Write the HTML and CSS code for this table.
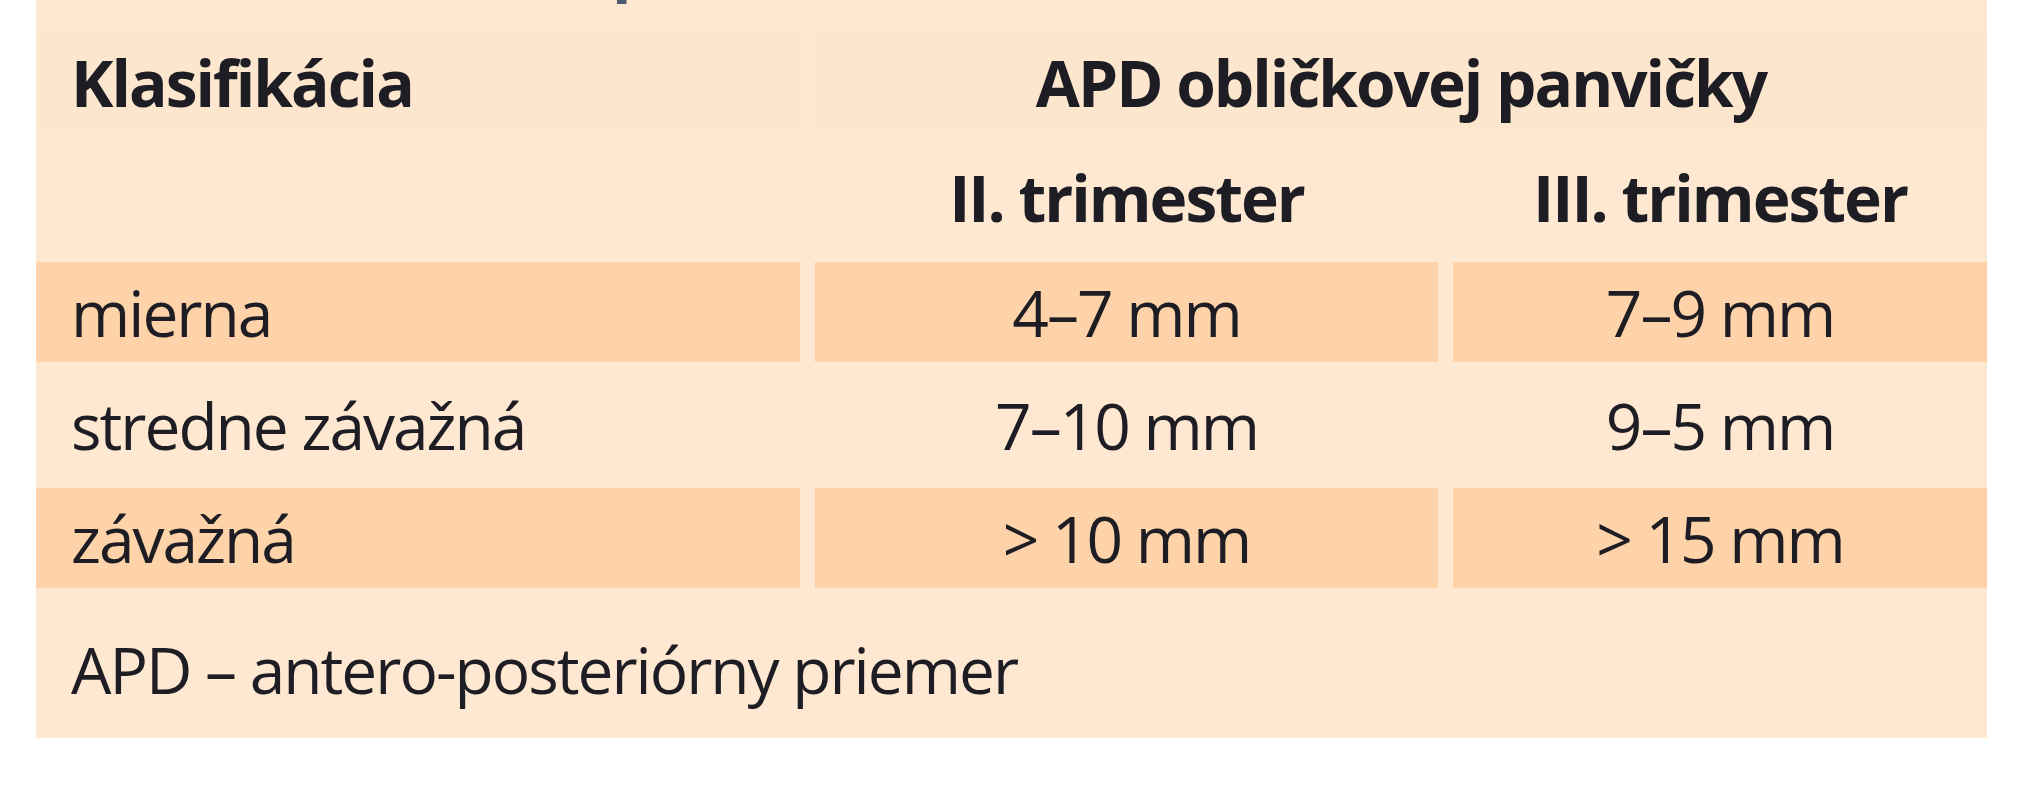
FILE: index.html
```html
<!DOCTYPE html>
<html lang="sk">
<head>
<meta charset="utf-8">
<title>Klasifikácia APD obličkovej panvičky</title>
<link rel="stylesheet" href="styles.css">
</head>
<body>
<div class="panel">
  <div class="caption"><span class="caption-text">p</span></div>
  <div class="grid">
    <div class="cell hd shade left">Klasifikácia</div>
    <div class="cell hd shade span2">APD obličkovej panvičky</div>
    <div class="cell hd left"></div>
    <div class="cell hd">II. trimester</div>
    <div class="cell hd">III. trimester</div>

    <div class="cell hl left">mierna</div>
    <div class="cell hl">4–7 mm</div>
    <div class="cell hl">7–9 mm</div>

    <div class="cell left">stredne závažná</div>
    <div class="cell">7–10 mm</div>
    <div class="cell">9–5 mm</div>

    <div class="cell hl left">závažná</div>
    <div class="cell hl">&gt; 10 mm</div>
    <div class="cell hl">&gt; 15 mm</div>
  </div>
  <div class="note">APD – antero-posteriórny priemer</div>
</div>
</body>
</html>
```

FILE: styles.css
```css
html, body {
  margin: 0;
  padding: 0;
  background: #ffffff;
}

body {
  font-family: "Open Sans", "Noto Sans", sans-serif;
  color: #1e1d24;
}

.panel {
  margin-left: 36px;
  width: 1951px;
  background: #fee8d1;
}

.caption {
  height: 7px;
  overflow: hidden;
  padding-left: 576px;
}

.caption-text {
  display: block;
  margin-top: -68px;
  font-size: 64px;
  line-height: 64px;
  font-weight: 700;
  color: #4c5a6c;
}

.grid {
  margin-top: 25px;
  display: grid;
  grid-template-columns: 764px 623px 534px;
  grid-template-rows: 100px 104px 100px 100px 100px;
  gap: 13px 15px;
}

.cell {
  display: flex;
  align-items: center;
  justify-content: center;
  font-size: 64px;
  letter-spacing: -2px;
  white-space: nowrap;
}

.cell.left {
  justify-content: flex-start;
  padding-left: 35px;
}

.cell.hd {
  font-weight: 700;
}

.cell.shade {
  background: #fde6ce;
}

.cell.span2 {
  grid-column: span 2;
}

.cell.hl {
  background: #fed3a9;
}

.note {
  margin-top: 13px;
  height: 137px;
  display: flex;
  align-items: center;
  padding-left: 35px;
  font-size: 64px;
  letter-spacing: -2px;
  white-space: nowrap;
}
```
